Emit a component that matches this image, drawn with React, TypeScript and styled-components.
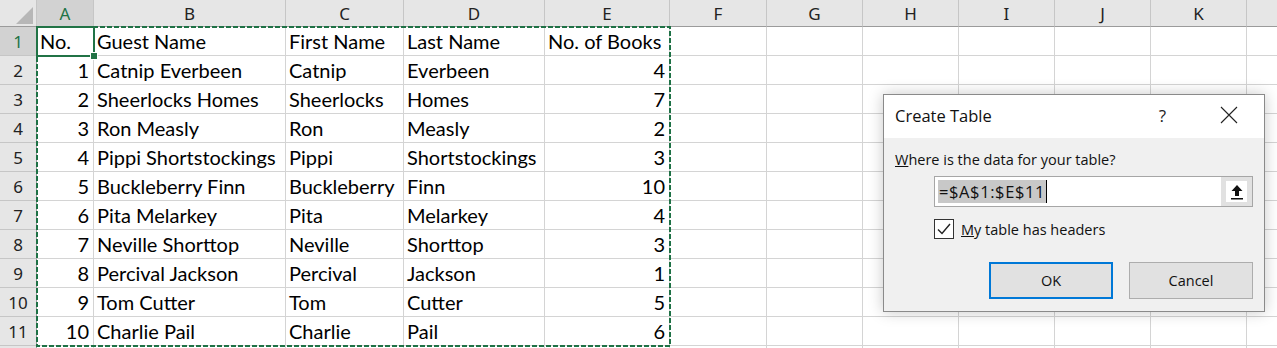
import React from "react";
import styled, { createGlobalStyle } from "styled-components";

const colWidths = [57, 192, 118, 141, 125, 97, 96, 96, 96, 96, 96, 96];
const colNames = ["A", "B", "C", "D", "E", "F", "G", "H", "I", "J", "K", ""];

const rows: (string | number)[][] = [
  ["No.", "Guest Name", "First Name", "Last Name", "No. of Books"],
  [1, "Catnip Everbeen", "Catnip", "Everbeen", 4],
  [2, "Sheerlocks Homes", "Sheerlocks", "Homes", 7],
  [3, "Ron Measly", "Ron", "Measly", 2],
  [4, "Pippi Shortstockings", "Pippi", "Shortstockings", 3],
  [5, "Buckleberry Finn", "Buckleberry", "Finn", 10],
  [6, "Pita Melarkey", "Pita", "Melarkey", 4],
  [7, "Neville Shorttop", "Neville", "Shorttop", 3],
  [8, "Percival Jackson", "Percival", "Jackson", 1],
  [9, "Tom Cutter", "Tom", "Cutter", 5],
  [10, "Charlie Pail", "Charlie", "Pail", 6],
  ["", "", "", "", ""],
];

const App = () => {
  return (
    <Page>
      <GlobalStyle />
      <Sheet>
        <Corner>
          <svg width="37" height="27">
            <polygon points="33,7 33,24 16,24" fill="#b7b7b7" />
          </svg>
        </Corner>
        {colNames.map((c, i) => (
          <ColHeader key={i} $selected={i === 0}>
            {c}
          </ColHeader>
        ))}
        {rows.map((row, r) => (
          <React.Fragment key={r}>
            {/* last row is only a sliver at the window edge */}
            <RowHeader $selected={r === 0}>{r < 11 ? r + 1 : ""}</RowHeader>
            {colNames.map((c, i) => {
              const v = row[i];
              return (
                <Cell key={i} $numeric={typeof v === "number"}>
                  {v ?? ""}
                </Cell>
              );
            })}
          </React.Fragment>
        ))}
        <MarchingAnts>
          <svg width="635" height="321">
            <rect
              x="1"
              y="1"
              width="633"
              height="319"
              fill="none"
              stroke="#1e7145"
              strokeWidth="2"
              strokeDasharray="5 2"
            />
          </svg>
        </MarchingAnts>
        <ActiveCell>
          <FillHandle />
        </ActiveCell>
      </Sheet>

      <Dialog>
        <TitleBar>
          <Title>Create Table</Title>
          <TitleButtons>
            <Help>?</Help>
            <CloseIcon width="18" height="18" viewBox="0 0 18 18">
              <path d="M1 1 L17 17 M17 1 L1 17" stroke="#222" strokeWidth="1.1" />
            </CloseIcon>
          </TitleButtons>
        </TitleBar>
        <Body>
          <Label>
            <u>W</u>here is the data for your table?
          </Label>
          <RangeBox>
            <RangeInput>
              <Selected>=$A$1:$E$11</Selected>
              <Caret />
            </RangeInput>
            <RangeButton>
              <ArrowBox>
                <svg width="14" height="16" viewBox="0 0 14 16">
                  <path d="M7 1 L12.5 7 L9 7 L9 12 L5 12 L5 7 L1.5 7 Z" fill="#111" />
                  <rect x="1" y="14" width="12" height="1.5" fill="#111" />
                </svg>
              </ArrowBox>
            </RangeButton>
          </RangeBox>
          <CheckRow>
            <CheckBox>
              <svg width="18" height="18" viewBox="0 0 18 18">
                <path d="M3 9.5 L7 13.5 L15 4" stroke="#222" strokeWidth="1.4" fill="none" />
              </svg>
            </CheckBox>
            <CheckLabel>
              <u>M</u>y table has headers
            </CheckLabel>
          </CheckRow>
          <Buttons>
            <Button $primary>OK</Button>
            <Button>Cancel</Button>
          </Buttons>
        </Body>
      </Dialog>
    </Page>
  );
};

export default App;

const GlobalStyle = createGlobalStyle`
  html, body {
    margin: 0;
    padding: 0;
    background: #ffffff;
    overflow: hidden;
  }
  #root {
    width: 1277px;
    height: 348px;
  }
`;

const Page = styled.div`
  position: relative;
  width: 1277px;
  height: 348px;
  overflow: hidden;
  background: #fff;
`;

const Sheet = styled.div`
  position: relative;
  display: grid;
  grid-template-columns: 37px ${colWidths.map((w) => `${w}px`).join(" ")};
  grid-template-rows: 27px repeat(12, 29px);
`;

const HeaderBase = styled.div<{ $selected?: boolean }>`
  box-sizing: border-box;
  display: flex;
  align-items: center;
  justify-content: center;
  font-family: "Noto Sans", "Open Sans", sans-serif;
  font-size: 17px;
  background: ${(p) => (p.$selected ? "#d2d2d2" : "#e6e6e6")};
  color: ${(p) => (p.$selected ? "#217346" : "#222")};
`;

const Corner = styled(HeaderBase)`
  border-right: 1px solid #c6c6c6;
  border-bottom: 1px solid #9b9b9b;
`;

const ColHeader = styled(HeaderBase)`
  border-right: 1px solid #c6c6c6;
  border-bottom: 1px solid #9b9b9b;
  padding-top: 1px;
`;

const RowHeader = styled(HeaderBase)`
  border-right: 1px solid #9b9b9b;
  border-bottom: 1px solid #c6c6c6;
  padding-top: 1px;
`;

const Cell = styled.div<{ $numeric?: boolean }>`
  box-sizing: border-box;
  display: flex;
  align-items: center;
  justify-content: ${(p) => (p.$numeric ? "flex-end" : "flex-start")};
  padding: 0 ${(p) => (p.$numeric ? "4px" : "0")} 0 ${(p) => (p.$numeric ? "0" : "3px")};
  border-right: 1px solid #d4d4d4;
  border-bottom: 1px solid #d4d4d4;
  font-family: Lato, "Liberation Sans", sans-serif;
  font-size: 20px;
  color: #000;
  white-space: nowrap;
`;

const MarchingAnts = styled.div`
  position: absolute;
  left: 36px;
  top: 26px;
  width: 635px;
  height: 321px;
  pointer-events: none;
  svg {
    display: block;
  }
`;

const ActiveCell = styled.div`
  position: absolute;
  left: 36px;
  top: 26px;
  width: 59px;
  height: 31px;
  box-sizing: border-box;
  border: 2px solid #217346;
`;

const FillHandle = styled.div`
  position: absolute;
  right: -5px;
  bottom: -5px;
  width: 6px;
  height: 6px;
  background: #217346;
  border: 1px solid #fff;
`;

const Dialog = styled.div`
  position: absolute;
  left: 883px;
  top: 94px;
  width: 382px;
  height: 218px;
  box-sizing: border-box;
  border: 1px solid #8a8a8a;
  background: #f0f0f0;
  box-shadow: 0 0 14px rgba(0, 0, 0, 0.22);
  font-family: "Open Sans", "Noto Sans", sans-serif;
  color: #111;
  display: flex;
  flex-direction: column;
`;

const TitleBar = styled.div`
  height: 43px;
  background: #fff;
  display: flex;
  align-items: center;
  justify-content: space-between;
  padding: 0 26px 0 11px;
`;

const Title = styled.div`
  font-size: 16.5px;
  margin-top: -3px;
`;

const TitleButtons = styled.div`
  display: flex;
  align-items: center;
  gap: 54px;
  margin-top: -3px;
`;

const Help = styled.div`
  font-size: 17px;
  color: #222;
`;

const CloseIcon = styled.svg`
  display: block;
`;

const Body = styled.div`
  flex: 1;
  padding: 12px 11px 0 11px;
  display: flex;
  flex-direction: column;
`;

const Label = styled.div`
  font-size: 14.5px;
  line-height: 20px;
`;

const RangeBox = styled.div`
  margin: 6px 0 0 39px;
  width: 319px;
  height: 31px;
  box-sizing: border-box;
  border: 1px solid #a6a6a6;
  background: #fff;
  display: flex;
`;

const RangeInput = styled.div`
  flex: 1;
  display: flex;
  align-items: center;
  padding-left: 3px;
  font-size: 16.5px;
`;

const Selected = styled.span`
  background: #c8c8c8;
  color: #111;
  line-height: 23px;
  padding: 0 1px;
  letter-spacing: 0.6px;
`;

const Caret = styled.span`
  width: 1px;
  height: 23px;
  background: #000;
`;

const RangeButton = styled.div`
  width: 31px;
  background: #e1e1e1;
  display: flex;
  align-items: center;
  justify-content: center;
`;

const ArrowBox = styled.div`
  width: 21px;
  height: 21px;
  background: #fff;
  display: flex;
  align-items: center;
  justify-content: center;
`;

const CheckRow = styled.div`
  display: flex;
  align-items: center;
  gap: 7px;
  margin: 12px 0 0 39px;
`;

const CheckBox = styled.div`
  width: 20px;
  height: 20px;
  box-sizing: border-box;
  border: 1px solid #333;
  background: #fff;
  display: flex;
  align-items: center;
  justify-content: center;
`;

const CheckLabel = styled.div`
  font-size: 14.5px;
`;

const Buttons = styled.div`
  display: flex;
  justify-content: flex-end;
  gap: 16px;
  margin: 23px 0 0 0;
`;

const Button = styled.div<{ $primary?: boolean }>`
  width: 124px;
  height: 37px;
  box-sizing: border-box;
  border: ${(p) => (p.$primary ? "2px solid #0078d7" : "1px solid #adadad")};
  background: #e1e1e1;
  display: flex;
  align-items: center;
  justify-content: center;
  font-size: 14.5px;
  color: #111;
`;
